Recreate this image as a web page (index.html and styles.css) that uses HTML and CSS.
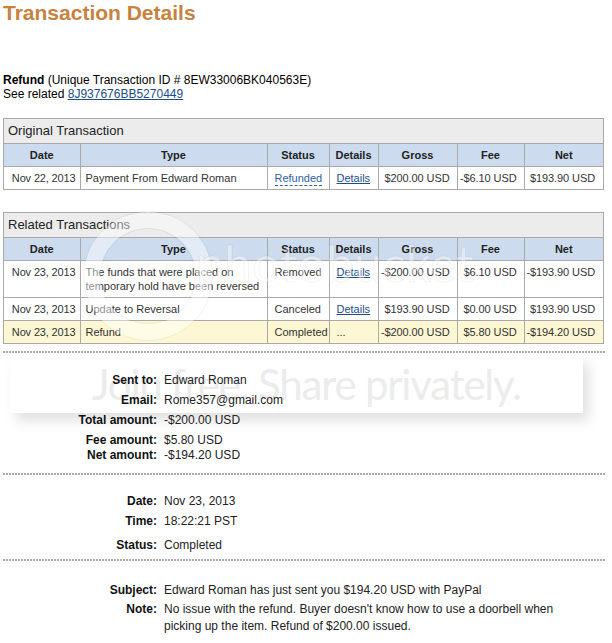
FILE: index.html
```html
<!DOCTYPE html>
<html lang="en">
<head>
<meta charset="utf-8">
<title>Transaction Details</title>
<link rel="stylesheet" href="styles.css">
</head>
<body>
<main class="page">
  <h1 class="page-title">Transaction Details</h1>

  <div class="txn-ref">
    <p><strong>Refund</strong> (Unique Transaction ID # 8EW33006BK040563E)</p>
    <p>See related <a href="#">8J937676BB5270449</a></p>
  </div>

  <section class="panel">
    <h2 class="panel-title">Original Transaction</h2>
    <table class="txn-table">
      <colgroup>
        <col class="c-date"><col class="c-type"><col class="c-status"><col class="c-details">
        <col class="c-gross"><col class="c-fee"><col class="c-net">
      </colgroup>
      <thead>
        <tr><th>Date</th><th>Type</th><th>Status</th><th>Details</th><th>Gross</th><th>Fee</th><th>Net</th></tr>
      </thead>
      <tbody>
        <tr>
          <td class="date">Nov 22, 2013</td>
          <td class="type">Payment From Edward Roman</td>
          <td class="status"><a href="#" class="status-link">Refunded</a></td>
          <td class="link"><a href="#">Details</a></td>
          <td class="amt">$200.00 USD</td>
          <td class="amt fee">-$6.10 USD</td>
          <td class="amt net">$193.90 USD</td>
        </tr>
      </tbody>
    </table>
  </section>

  <section class="panel">
    <h2 class="panel-title">Related Transactions</h2>
    <table class="txn-table">
      <colgroup>
        <col class="c-date"><col class="c-type"><col class="c-status"><col class="c-details">
        <col class="c-gross"><col class="c-fee"><col class="c-net">
      </colgroup>
      <thead>
        <tr><th>Date</th><th>Type</th><th>Status</th><th>Details</th><th>Gross</th><th>Fee</th><th>Net</th></tr>
      </thead>
      <tbody>
        <tr>
          <td class="date">Nov 23, 2013</td>
          <td class="type">The funds that were placed on temporary hold have been reversed</td>
          <td class="status">Removed</td>
          <td class="link"><a href="#">Details</a></td>
          <td class="amt">-$200.00 USD</td>
          <td class="amt fee">$6.10 USD</td>
          <td class="amt net">-$193.90 USD</td>
        </tr>
        <tr>
          <td class="date">Nov 23, 2013</td>
          <td class="type">Update to Reversal</td>
          <td class="status">Canceled</td>
          <td class="link"><a href="#">Details</a></td>
          <td class="amt">$193.90 USD</td>
          <td class="amt fee">$0.00 USD</td>
          <td class="amt net">$193.90 USD</td>
        </tr>
        <tr class="current">
          <td class="date">Nov 23, 2013</td>
          <td class="type">Refund</td>
          <td class="status">Completed</td>
          <td class="link">...</td>
          <td class="amt">-$200.00 USD</td>
          <td class="amt fee">$5.80 USD</td>
          <td class="amt net">-$194.20 USD</td>
        </tr>
      </tbody>
    </table>
  </section>

  <hr class="dots dots-first">
  <dl class="details details-party">
    <div class="row"><dt>Sent to:</dt><dd>Edward Roman</dd></div>
    <div class="row"><dt>Email:</dt><dd>Rome357@gmail.com</dd></div>
    <div class="row"><dt>Total amount:</dt><dd>-$200.00 USD</dd></div>
    <div class="row"><dt>Fee amount:</dt><dd>$5.80 USD</dd></div>
    <div class="row row-close"><dt>Net amount:</dt><dd>-$194.20 USD</dd></div>
  </dl>

  <hr class="dots">
  <dl class="details details-time">
    <div class="row"><dt>Date:</dt><dd>Nov 23, 2013</dd></div>
    <div class="row"><dt>Time:</dt><dd>18:22:21 PST</dd></div>
    <div class="row row-loose"><dt>Status:</dt><dd>Completed</dd></div>
  </dl>

  <hr class="dots">
  <dl class="details details-message">
    <div class="row"><dt>Subject:</dt><dd>Edward Roman has just sent you $194.20 USD with PayPal</dd></div>
    <div class="row row-note"><dt>Note:</dt><dd>No issue with the refund. Buyer doesn't know how to use a doorbell when picking up the item. Refund of $200.00 issued.</dd></div>
  </dl>
</main>

<div class="share-banner" aria-hidden="true"><span>Join free. Share privately.</span></div>

<svg class="bucket-mark" aria-hidden="true" width="612" height="643" viewBox="0 0 612 643">
  <g fill="none">
    <circle cx="148" cy="276" r="56" stroke="#ffffff" stroke-opacity="0.45" stroke-width="16"/>
    <circle cx="148" cy="276" r="64.5" stroke="#000" stroke-opacity="0.05" stroke-width="1"/>
    <circle cx="148" cy="276" r="47.5" stroke="#000" stroke-opacity="0.05" stroke-width="1"/>
  </g>
  <text x="196" y="282" class="bucket-word">photobucket</text>
</svg>
</body>
</html>
```

FILE: styles.css
```css
html {
  background: #ffffff;
}

body {
  margin: 0;
  position: relative;
  width: 612px;
  height: 643px;
  overflow: hidden;
  font-family: "Liberation Sans", Arial, sans-serif;
  font-size: 12px;
  color: #000;
}

.page {
  padding: 0 3px;
}

a {
  color: #1c4c8c;
  text-decoration: underline;
}

/* Heading */
.page-title {
  margin: 0;
  padding-top: 1px;
  font-size: 21px;
  line-height: 24px;
  font-weight: bold;
  color: #c8823f;
}

/* Transaction reference lines */
.txn-ref {
  margin-top: 48px;
}

.txn-ref p {
  margin: 0;
  line-height: 14px;
}

/* Boxed transaction tables */
.panel {
  width: 601px;
  box-sizing: border-box;
  margin-top: 17px;
  border: 1px solid #a9a9a9;
}

.panel + .panel {
  margin-top: 22px;
}

.panel-title {
  margin: 0;
  padding: 0 4px;
  font-size: 13px;
  font-weight: normal;
  line-height: 24px;
  color: #222;
  background: #ececec;
  border-bottom: 1px solid #a9a9a9;
}

.txn-table {
  width: 100%;
  border-collapse: collapse;
  table-layout: fixed;
  font-size: 11px;
  color: #333;
}

.c-date { width: 76px; }
.c-type { width: 187px; }
.c-status { width: 62px; }
.c-details { width: 49px; }
.c-gross { width: 79px; }
.c-fee { width: 67px; }
.c-net { width: 79px; }

.txn-table th,
.txn-table td {
  border: 1px solid #a9a9a9;
  padding: 4px 5px;
  line-height: 14px;
  vertical-align: top;
  text-align: left;
}

.txn-table tr > :first-child { border-left: 0; }
.txn-table tr > :last-child { border-right: 0; }
.txn-table thead th { border-top: 0; }
.txn-table tbody tr:last-child td { border-bottom: 0; }

.txn-table th {
  background: #ccdcee;
  font-weight: bold;
  text-align: center;
  color: #222;
}

.txn-table td {
  background: #fff;
}

.txn-table .current td {
  background: #fdf7d3;
}

.txn-table .date {
  text-align: right;
  white-space: nowrap;
  padding-right: 4px;
  padding-left: 0;
  letter-spacing: -0.15px;
}

.txn-table .type {
  padding-right: 2px;
}

.txn-table .status,
.txn-table .link {
  padding-left: 7px;
  padding-right: 0;
  white-space: nowrap;
}

.txn-table .amt {
  text-align: right;
  white-space: nowrap;
  letter-spacing: -0.1px;
  padding-left: 0;
  padding-right: 7px;
}

.txn-table .net {
  padding-right: 8px;
}

.status-link {
  color: #2d5fa8;
  text-decoration: none;
  border-bottom: 1px dashed #2d5fa8;
  padding-bottom: 1px;
}

/* Dotted separators */
.dots {
  width: 603px;
  height: 2px;
  margin: 0;
  border: 0;
  background-image: repeating-linear-gradient(to right, #ababab 0 2px, transparent 2px 3px);
}

.dots-first {
  margin-top: 7px;
}

/* Label / value detail lists */
.details {
  margin: 0;
}

.details .row {
  display: grid;
  grid-template-columns: 154px 420px;
  column-gap: 7px;
  line-height: 15px;
  margin-top: 5px;
}

.details .row:first-child {
  margin-top: 0;
}

.details dt {
  font-weight: bold;
  text-align: right;
  color: #111;
}

.details dd {
  margin: 0;
  color: #222;
}

.details .row-close { margin-top: 0; }
.details .row-loose { margin-top: 9px; }
.details .row-note { margin-top: 3px; }
.details .row-note dd { line-height: 17px; }
.details .row-note dt { line-height: 17px; }

.details-party {
  padding: 20px 0 10px;
}

.details-time {
  padding: 19px 0 6px;
}

.details-message {
  padding-top: 22px;
}

/* Photo host watermark: banner sits behind the text, the mark floats over it */
.share-banner {
  position: absolute;
  z-index: -1;
  left: 10px;
  top: 355px;
  width: 573px;
  height: 58px;
  box-sizing: border-box;
  padding-left: 82px;
  background: #fff;
  box-shadow: 6px 8px 12px rgba(0, 0, 0, 0.12);
  font-family: Lato, "Open Sans", sans-serif;
  font-size: 42px;
  letter-spacing: -1.2px;
  line-height: 58px;
  color: #ececec;
  white-space: nowrap;
}

.bucket-mark {
  position: absolute;
  left: 0;
  top: 0;
  pointer-events: none;
}

.bucket-word {
  font-family: Lato, "Open Sans", sans-serif;
  font-size: 50px;
  fill: #ffffff;
  fill-opacity: 0.4;
  stroke: #000;
  stroke-opacity: 0.05;
  stroke-width: 1;
}
```
